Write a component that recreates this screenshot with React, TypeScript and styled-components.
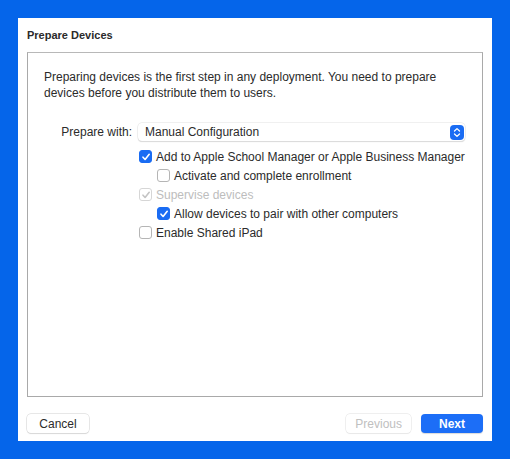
import styled, { createGlobalStyle } from 'styled-components';

const GlobalStyle = createGlobalStyle`
  html, body {
    margin: 0;
    padding: 0;
    background: #0565ea;
  }
  body {
    font-family: "Liberation Sans", Arial, sans-serif;
  }
`;

type Option = {
  label: string;
  checked: boolean;
  disabled?: boolean;
  indent?: boolean;
};

const options: Option[] = [
  { label: 'Add to Apple School Manager or Apple Business Manager', checked: true },
  { label: 'Activate and complete enrollment', checked: false, indent: true },
  { label: 'Supervise devices', checked: true, disabled: true },
  { label: 'Allow devices to pair with other computers', checked: true, indent: true },
  { label: 'Enable Shared iPad', checked: false },
];

const Check = ({ checked, disabled }: { checked: boolean; disabled?: boolean }) => (
  <Box $checked={checked} $disabled={disabled}>
    {checked && (
      <svg width="10" height="10" viewBox="0 0 10 10">
        <path
          d="M2 5.2 L4.1 7.5 L8.2 2.3"
          fill="none"
          stroke={disabled ? '#c4c4c4' : '#fff'}
          strokeWidth="1.6"
          strokeLinecap="round"
          strokeLinejoin="round"
        />
      </svg>
    )}
  </Box>
);

const App = (): JSX.Element => {
  return (
    <>
      <GlobalStyle />
      <Window>
        <Title>Prepare Devices</Title>
        <Panel>
          <Intro>
            Preparing devices is the first step in any deployment. You need to prepare
            <br />
            devices before you distribute them to users.
          </Intro>
          <Form>
            <Label>Prepare with:</Label>
            <Select>
              <span>Manual Configuration</span>
              <Stepper>
                <svg width="8" height="11" viewBox="0 0 8 11">
                  <path
                    d="M1.5 4 L4 1.6 L6.5 4 M1.5 7 L4 9.4 L6.5 7"
                    fill="none"
                    stroke="#fff"
                    strokeWidth="1.3"
                    strokeLinecap="round"
                    strokeLinejoin="round"
                  />
                </svg>
              </Stepper>
            </Select>
            <Options>
              {options.map((opt, idx) => (
                <Row key={idx} $indent={opt.indent} $disabled={opt.disabled}>
                  <Check checked={opt.checked} disabled={opt.disabled} />
                  {opt.label}
                </Row>
              ))}
            </Options>
          </Form>
        </Panel>
        <Footer>
          <Button>Cancel</Button>
          <Spacer />
          <Button disabled>Previous</Button>
          <PrimaryButton>Next</PrimaryButton>
        </Footer>
      </Window>
    </>
  );
};

export default App;

const Window = styled.div`
  margin: 18px 0 0 18px;
  width: 474px;
  height: 423px;
  box-sizing: border-box;
  background: #fff;
  padding: 10px 9px 8px 9px;
  display: flex;
  flex-direction: column;
`;

const Title = styled.div`
  font-size: 11px;
  font-weight: bold;
  color: #2a2a2a;
  height: 14px;
  line-height: 14px;
`;

const Panel = styled.div`
  margin-top: 10px;
  height: 345px;
  box-sizing: border-box;
  border: 1px solid #a9a9a9;
  border-top-color: #b8b8b8;
  padding: 16px 16px 0 16px;
  color: #262626;
`;

const Intro = styled.p`
  margin: 0;
  font-size: 12px;
  line-height: 16px;
  color: #2b2b2b;
`;

const Form = styled.div`
  margin-top: 22px;
  display: grid;
  grid-template-columns: 94px 1fr;
  column-gap: 0;
  padding-right: 16px;
  margin-right: -14px;
`;

const Label = styled.div`
  font-size: 12px;
  line-height: 18px;
  text-align: right;
  padding-right: 6px;
  color: #2b2b2b;
`;

const Select = styled.div`
  height: 18px;
  box-sizing: border-box;
  border-radius: 4px;
  box-shadow: 0 0 0 0.5px #e2e2e2, 0 1px 1px rgba(0, 0, 0, 0.18);
  display: flex;
  align-items: center;
  justify-content: space-between;
  padding: 0 1px 0 7px;
  font-size: 12px;
  color: #2b2b2b;
  width: 327px;
`;

const Stepper = styled.div`
  width: 14px;
  height: 15px;
  border-radius: 4px;
  background: #1a6cf3;
  display: flex;
  align-items: center;
  justify-content: center;
`;

const Options = styled.div`
  grid-column: 2;
  display: flex;
  flex-direction: column;
  margin-top: 6px;
`;

const Row = styled.label<{ $indent?: boolean; $disabled?: boolean }>`
  display: flex;
  align-items: center;
  gap: 4px;
  height: 19px;
  font-size: 12px;
  padding-left: ${({ $indent }) => ($indent ? '19px' : '1px')};
  color: ${({ $disabled }) => ($disabled ? '#bdbdbd' : '#2b2b2b')};
`;

const Box = styled.span<{ $checked: boolean; $disabled?: boolean }>`
  width: 13px;
  height: 13px;
  box-sizing: border-box;
  border-radius: 3px;
  display: flex;
  align-items: center;
  justify-content: center;
  background: ${({ $checked, $disabled }) => ($checked && !$disabled ? '#1a6cf3' : '#fff')};
  border: 1px solid
    ${({ $checked, $disabled }) => ($disabled ? '#d6d6d6' : $checked ? '#1a6cf3' : '#b5b5b5')};
`;

const Footer = styled.div`
  margin-top: auto;
  display: flex;
  align-items: center;
  gap: 10px;
`;

const Spacer = styled.div`
  flex: 1;
`;

const Button = styled.button`
  height: 19px;
  min-width: 62px;
  padding: 0 9px;
  border-radius: 4px;
  border: none;
  background: #fff;
  box-shadow: 0 0 0 0.5px #d0d0d0, 0 1px 1px rgba(0, 0, 0, 0.12);
  font-family: inherit;
  font-size: 12px;
  color: #2b2b2b;
  &:disabled {
    color: #c0c0c0;
    box-shadow: 0 0 0 0.5px #e0e0e0, 0 1px 1px rgba(0, 0, 0, 0.06);
  }
`;

const PrimaryButton = styled(Button)`
  background: #1c6ef7;
  color: #fff;
  font-weight: bold;
  box-shadow: 0 1px 1px rgba(0, 0, 0, 0.15);
`;
